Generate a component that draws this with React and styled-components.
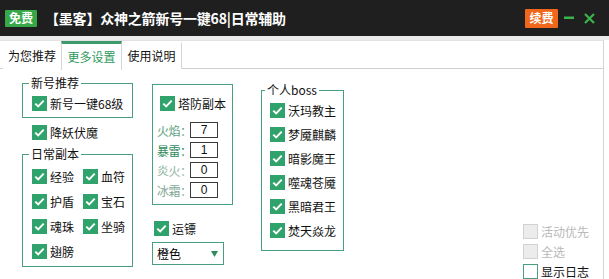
import React from "react";
import styled, { createGlobalStyle } from "styled-components";

const GlobalStyle = createGlobalStyle`
  html, body { margin: 0; padding: 0; background: #ffffff; }
  body { font-family: "Noto Sans CJK SC", "Microsoft YaHei", sans-serif; font-size: 12px; color: #000; }
  * { box-sizing: border-box; }
`;

const GREEN = "#2fa36b";
const LINE = "#4a9f7f";

const Window = styled.div`
  width: 609px;
  height: 279px;
  background: #fff;
  overflow: hidden;
  display: flex;
  flex-direction: column;
`;

const TitleBar = styled.div`
  height: 36px;
  flex: none;
  background: #1f1f1f;
  display: flex;
  align-items: center;
  padding: 0 0 0 5px;
`;

const Badge = styled.span`
  display: inline-flex;
  align-items: center;
  justify-content: center;
  width: ${(p) => p.$w}px;
  height: ${(p) => p.$h}px;
  background: ${(p) => p.$bg};
  color: #fff;
  font-size: 12px;
  font-weight: 700;
  border-radius: 1px;
  line-height: 1;
`;

const Title = styled.span`
  margin-left: 8px;
  color: #fff;
  font-size: 14px;
  font-weight: 700;
  white-space: nowrap;
  letter-spacing: -0.2px;
`;

const Spacer = styled.div`
  flex: 1;
`;

const WinButtons = styled.div`
  display: flex;
  align-items: center;
  gap: 4px;
  margin-right: 11px;
`;

const IconBtn = styled.span`
  display: inline-flex;
  width: ${(p) => p.$w}px;
  height: 20px;
  align-items: center;
  justify-content: center;
`;

const Band = styled.div`
  height: 4px;
  flex: none;
  background: #ebebeb;
`;

const TabBar = styled.div`
  height: 29px;
  flex: none;
  width: 604px;
  display: flex;
  padding-left: 3px;
  border-top: 1px solid #e2e2e2;
  border-bottom: 1px solid #cfcfcf;
  border-right: 1px solid #d4d4d4;
  background: #fff;
`;

const Tab = styled.div`
  width: ${(p) => p.$w}px;
  height: ${(p) => (p.$active ? 29 : 28)}px;
  display: flex;
  align-items: center;
  justify-content: center;
  font-size: 12px;
  color: ${(p) => (p.$active ? "#2e9a5c" : "#111")};
  border-right: 1px solid #d6d6d6;
  border-left: ${(p) => (p.$active ? "1px solid #d6d6d6" : "none")};
  border-top: 3px solid ${(p) => (p.$active ? "#3a9a6a" : "transparent")};
  background: #fff;
  padding-bottom: 2px;
  margin-left: ${(p) => (p.$active ? -1 : 0)}px;
`;

const Content = styled.div`
  flex: 1;
  width: 604px;
  border-right: 1px solid #d4d4d4;
  display: flex;
  align-items: flex-start;
  position: relative;
`;

const Column = styled.div`
  display: flex;
  flex-direction: column;
  align-items: flex-start;
  margin-left: ${(p) => p.$ml}px;
  margin-top: ${(p) => p.$mt}px;
`;

const Group = styled.fieldset`
  margin: ${(p) => p.$mt || 0}px 0 0 0;
  padding: 0;
  width: ${(p) => p.$w}px;
  border: 1px solid ${LINE};
  min-inline-size: 0;
`;

const Legend = styled.legend`
  margin-left: ${(p) => p.$ml}px;
  padding: 0 2px;
  font-size: 12px;
  line-height: 14px;
  color: #111;
`;

const GroupBody = styled.div`
  display: ${(p) => (p.$grid ? "grid" : "flex")};
  flex-direction: column;
  grid-template-columns: 51px auto;
  row-gap: ${(p) => p.$gap || 0}px;
  padding: ${(p) => p.$pad};
  align-items: flex-start;
`;

const CheckRow = styled.label`
  display: flex;
  align-items: center;
  height: 15px;
  gap: 3px;
  font-size: 12px;
  line-height: 15px;
  white-space: nowrap;
  color: ${(p) => (p.$disabled ? "#b9b9b9" : "#111")};
  margin-top: ${(p) => p.$mt || 0}px;
  margin-left: ${(p) => p.$ml || 0}px;
`;

const Box = styled.span`
  width: 15px;
  height: 15px;
  flex: none;
  display: inline-flex;
  align-items: center;
  justify-content: center;
  background: ${(p) => (p.$state === "on" ? GREEN : p.$state === "disabled" ? "#ececec" : "#fff")};
  border: 1px solid
    ${(p) => (p.$state === "on" ? GREEN : p.$state === "disabled" ? "#d2d2d2" : LINE)};
`;

const Check = ({ label, state = "on", mt, ml }) => (
  <CheckRow $disabled={state === "disabled"} $mt={mt} $ml={ml}>
    <Box $state={state}>
      {state === "on" && (
        <svg width="13" height="13" viewBox="0 0 13 13">
          <path d="M2.3 6.6 L5.2 9.4 L10.7 3.6" fill="none" stroke="#fff" strokeWidth="2" />
        </svg>
      )}
    </Box>
    <span>{label}</span>
  </CheckRow>
);

const FieldRow = styled.div`
  display: flex;
  align-items: center;
  height: 20px;
`;

const FieldLabel = styled.span`
  width: 33px;
  font-size: 12px;
  white-space: nowrap;
  letter-spacing: -0.5px;
  color: ${(p) => p.$c};
`;

const NumBox = styled.span`
  width: 28px;
  height: 16px;
  border: 1px solid #3a3a3a;
  display: inline-flex;
  align-items: center;
  justify-content: center;
  font-size: 12px;
  line-height: 1;
  font-family: "Liberation Sans", Arial, sans-serif;
  color: #111;
`;

const Select = styled.div`
  width: 72px;
  height: 23px;
  margin-top: 6px;
  border: 1px solid ${LINE};
  display: flex;
  align-items: center;
  justify-content: space-between;
  padding: 0 5px 0 4px;
  font-size: 12px;
`;

const SideCol = styled.div`
  align-self: flex-end;
  display: flex;
  flex-direction: column;
  gap: 5px;
  margin-left: 179px;
`;

export default function App() {
  return (
    <>
      <GlobalStyle />
      <Window>
        <TitleBar>
          <Badge $w={32} $h={17} $bg="#37a847">免费</Badge>
          <Title>【墨客】众神之箭新号一键68|日常辅助</Title>
          <Spacer />
          <WinButtons>
            <Badge $w={33} $h={19} $bg="#f0661a">续费</Badge>
            <IconBtn $w={14}>
              <svg width="10" height="4" viewBox="0 0 10 4">
                <rect x="0" y="0.5" width="10" height="2.5" fill="#3ab54a" />
              </svg>
            </IconBtn>
            <IconBtn $w={18}>
              <svg width="11" height="11" viewBox="0 0 11 11">
                <path d="M1 1 L10 10 M10 1 L1 10" stroke="#3ab54a" strokeWidth="2.2" />
              </svg>
            </IconBtn>
          </WinButtons>
        </TitleBar>
        <Band />
        <TabBar>
          <Tab $w={59}>为您推荐</Tab>
          <Tab $w={61} $active>更多设置</Tab>
          <Tab $w={60}>使用说明</Tab>
        </TabBar>
        <Content>
          <Column $ml={22} $mt={7}>
            <Group $w={111}>
              <Legend $ml={6}>新号推荐</Legend>
              <GroupBody $pad="6px 0 6px 9px">
                <Check label="新号一键68级" />
              </GroupBody>
            </Group>
            <Check label="降妖伏魔" mt={7} ml={10} />
            <Group $w={111} $mt={7}>
              <Legend $ml={6}>日常副本</Legend>
              <GroupBody $grid $gap={10} $pad="8px 0 7px 9px">
                <Check label="经验" />
                <Check label="血符" />
                <Check label="护盾" />
                <Check label="宝石" />
                <Check label="魂珠" />
                <Check label="坐骑" />
                <Check label="翅膀" />
              </GroupBody>
            </Group>
          </Column>
          <Column $ml={19} $mt={15}>
            <Group $w={81}>
              <GroupBody $pad="11px 0 4px 4px">
                <Check label="塔防副本" ml={3} />
                <FieldRow style={{ marginTop: 9 }}>
                  <FieldLabel $c="#5e9f80">火焰：</FieldLabel>
                  <NumBox>7</NumBox>
                </FieldRow>
                <FieldRow>
                  <FieldLabel $c="#2f8a5c">暴雷：</FieldLabel>
                  <NumBox>1</NumBox>
                </FieldRow>
                <FieldRow>
                  <FieldLabel $c="#93b4a3">炎火：</FieldLabel>
                  <NumBox>0</NumBox>
                </FieldRow>
                <FieldRow>
                  <FieldLabel $c="#85a998">冰霜：</FieldLabel>
                  <NumBox>0</NumBox>
                </FieldRow>
              </GroupBody>
            </Group>
            <Check label="运镖" mt={16} ml={2} />
            <Select>
              <span>橙色</span>
              <svg width="7" height="6" viewBox="0 0 7 6">
                <path d="M0 0 L7 0 L3.5 6 Z" fill="#2e8b5c" />
              </svg>
            </Select>
          </Column>
          <Column $ml={28} $mt={14}>
            <Group $w={83}>
              <Legend $ml={3}>个人boss</Legend>
              <GroupBody $gap={9} $pad="6px 0 12px 8px">
                <Check label="沃玛教主" />
                <Check label="梦魇麒麟" />
                <Check label="暗影魔王" />
                <Check label="噬魂苍魇" />
                <Check label="黑暗君王" />
                <Check label="焚天焱龙" />
              </GroupBody>
            </Group>
          </Column>
          <SideCol>
            <Check label="活动优先" state="disabled" />
            <Check label="全选" state="disabled" />
            <Check label="显示日志" state="off" />
          </SideCol>
        </Content>
      </Window>
    </>
  );
}
